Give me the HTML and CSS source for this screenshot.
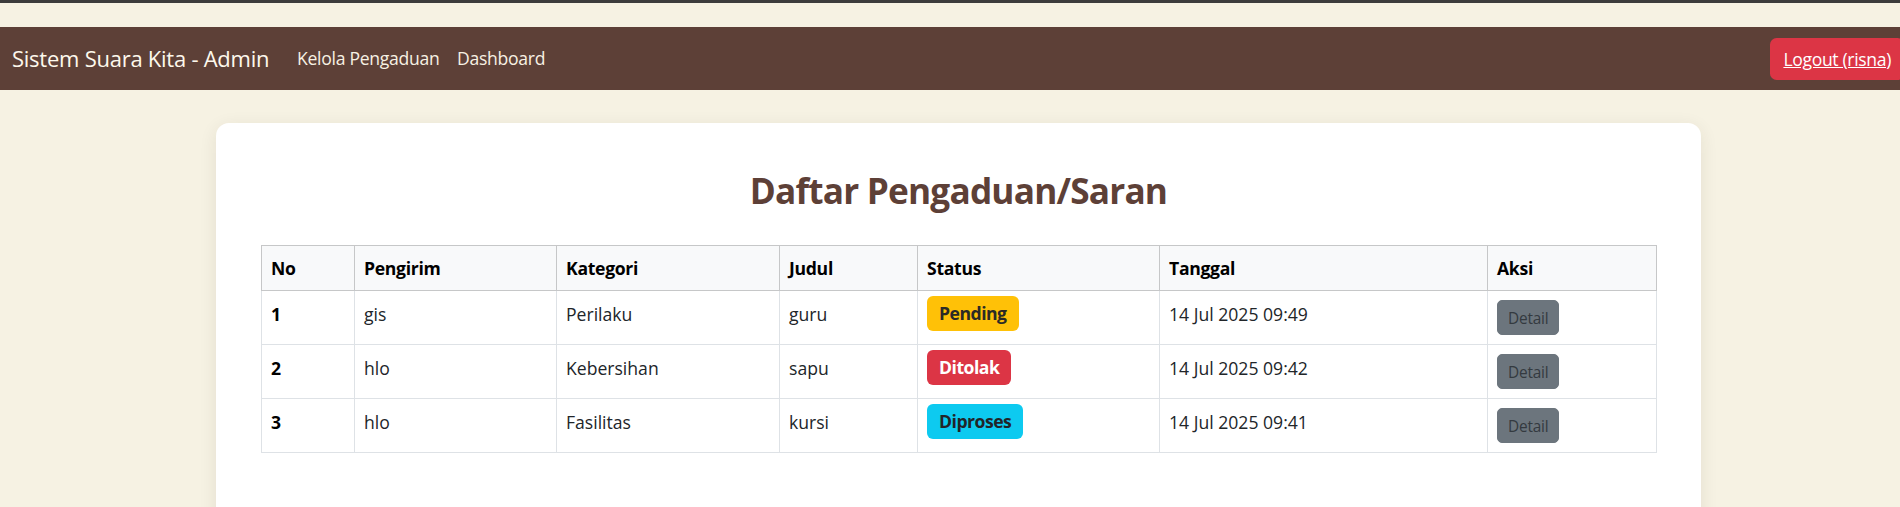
FILE: index.html
```html
<!DOCTYPE html>
<html lang="id">
<head>
<meta charset="utf-8">
<title>Kelola Pengaduan - Admin</title>
<link rel="stylesheet" href="styles.css">
</head>
<body>
<div class="page">
  <div class="topstrip"></div>
  <nav class="navbar">
    <a class="brand" href="#">Sistem Suara Kita - Admin</a>
    <ul class="nav-links">
      <li><a href="#">Kelola Pengaduan</a></li>
      <li><a href="#">Dashboard</a></li>
    </ul>
    <a class="btn-logout" href="#">Logout (risna)</a>
  </nav>
  <main class="card">
    <h2 class="title">Daftar Pengaduan/Saran</h2>
    <table class="table">
      <colgroup>
        <col class="c-no">
        <col class="c-pengirim">
        <col class="c-kategori">
        <col class="c-judul">
        <col class="c-status">
        <col class="c-tanggal">
        <col class="c-aksi">
      </colgroup>
      <thead>
        <tr>
          <th>No</th>
          <th>Pengirim</th>
          <th>Kategori</th>
          <th>Judul</th>
          <th>Status</th>
          <th>Tanggal</th>
          <th>Aksi</th>
        </tr>
      </thead>
      <tbody>
        <tr>
          <td class="cell-no">1</td>
          <td>gis</td>
          <td>Perilaku</td>
          <td>guru</td>
          <td class="cell-status"><span class="badge badge-pending">Pending</span></td>
          <td>14 Jul 2025 09:49</td>
          <td class="cell-action"><a class="btn-detail" href="#">Detail</a></td>
        </tr>
        <tr>
          <td class="cell-no">2</td>
          <td>hlo</td>
          <td>Kebersihan</td>
          <td>sapu</td>
          <td class="cell-status"><span class="badge badge-ditolak">Ditolak</span></td>
          <td>14 Jul 2025 09:42</td>
          <td class="cell-action"><a class="btn-detail" href="#">Detail</a></td>
        </tr>
        <tr>
          <td class="cell-no">3</td>
          <td>hlo</td>
          <td>Fasilitas</td>
          <td>kursi</td>
          <td class="cell-status"><span class="badge badge-diproses">Diproses</span></td>
          <td>14 Jul 2025 09:41</td>
          <td class="cell-action"><a class="btn-detail" href="#">Detail</a></td>
        </tr>
      </tbody>
    </table>
  </main>
</div>
</body>
</html>
```

FILE: styles.css
```css
html, body {
  margin: 0;
  padding: 0;
  overflow: hidden;
}

body {
  background: #f6f2e3;
  font-family: "Open Sans", "Noto Sans", sans-serif;
  font-size: 17.6px;
  line-height: 1.5;
  color: #212529;
}

.page {
  width: 1917px;
}

.topstrip {
  height: 3px;
  background: #3c3c3c;
  margin-bottom: 24px;
}

.navbar {
  height: 63px;
  background: #5d4037;
  display: flex;
  align-items: center;
  padding: 0 13px 0 12px;
  box-sizing: border-box;
}

.brand {
  font-size: 22px;
  line-height: 33px;
  color: #fdf8ec;
  text-decoration: none;
  margin-right: 19px;
  letter-spacing: -0.25px;
}

.nav-links {
  display: flex;
  list-style: none;
  margin: 0;
  padding: 0;
}

.nav-links a {
  display: block;
  color: #f7f1e3;
  text-decoration: none;
  padding: 0 8.8px;
  line-height: 26.4px;
  letter-spacing: -0.3px;
}

.btn-logout {
  margin-left: auto;
  background: #dc3545;
  color: #ffffff;
  border-radius: 6.6px;
  padding: 8px 13px;
  line-height: 26px;
  letter-spacing: -0.35px;
}

.card {
  width: 1485px;
  min-height: 460px;
  margin: 33px auto 0;
  background: #ffffff;
  border-radius: 13px;
  box-shadow: 0 4px 18px rgba(60, 40, 10, 0.09);
  padding: 46px 45px;
  box-sizing: border-box;
}

.title {
  margin: 0 0 34px;
  font-size: 35.2px;
  line-height: 42px;
  font-weight: 700;
  color: #5d4037;
  text-align: center;
  letter-spacing: -0.8px;
}

.table {
  width: 100%;
  border-collapse: collapse;
  table-layout: fixed;
}

.c-no { width: 93px; }
.c-pengirim { width: 202px; }
.c-kategori { width: 223px; }
.c-judul { width: 138px; }
.c-status { width: 242px; }
.c-tanggal { width: 328px; }
.c-aksi { width: 169px; }

.table th {
  background: #f8f9fa;
  color: #000000;
  font-weight: 700;
  text-align: left;
  padding: 8.8px 9px;
  line-height: 26.4px;
  border: 1px solid #c6c7c8;
  letter-spacing: -0.3px;
}

.table td {
  border: 1px solid #dee2e6;
  padding: 10px 9px 0;
  height: 43px;
  line-height: 26.4px;
  vertical-align: top;
  color: #212529;
}

.table td.cell-no {
  font-weight: 700;
  color: #000000;
}

.table td.cell-status {
  padding-top: 5px;
  height: 48px;
}

.table td.cell-action {
  padding-top: 9px;
  height: 44px;
}

.badge {
  display: inline-block;
  vertical-align: top;
  padding: 4.4px 12px;
  line-height: 26.4px;
  font-weight: 700;
  border-radius: 6px;
  letter-spacing: -0.5px;
}

.badge-pending {
  background: #ffc107;
  color: #2b2a26;
}

.badge-ditolak {
  background: #dc3545;
  color: #ffffff;
}

.badge-diproses {
  background: #0dcaf0;
  color: #212529;
}

.btn-detail {
  display: inline-block;
  vertical-align: top;
  font-size: 15.4px;
  line-height: 23px;
  padding: 6px 10px 4px;
  border: 1px solid #6c757d;
  border-radius: 5px;
  background: #6c757d;
  color: #343a40;
  text-decoration: none;
  letter-spacing: -0.2px;
}
```
